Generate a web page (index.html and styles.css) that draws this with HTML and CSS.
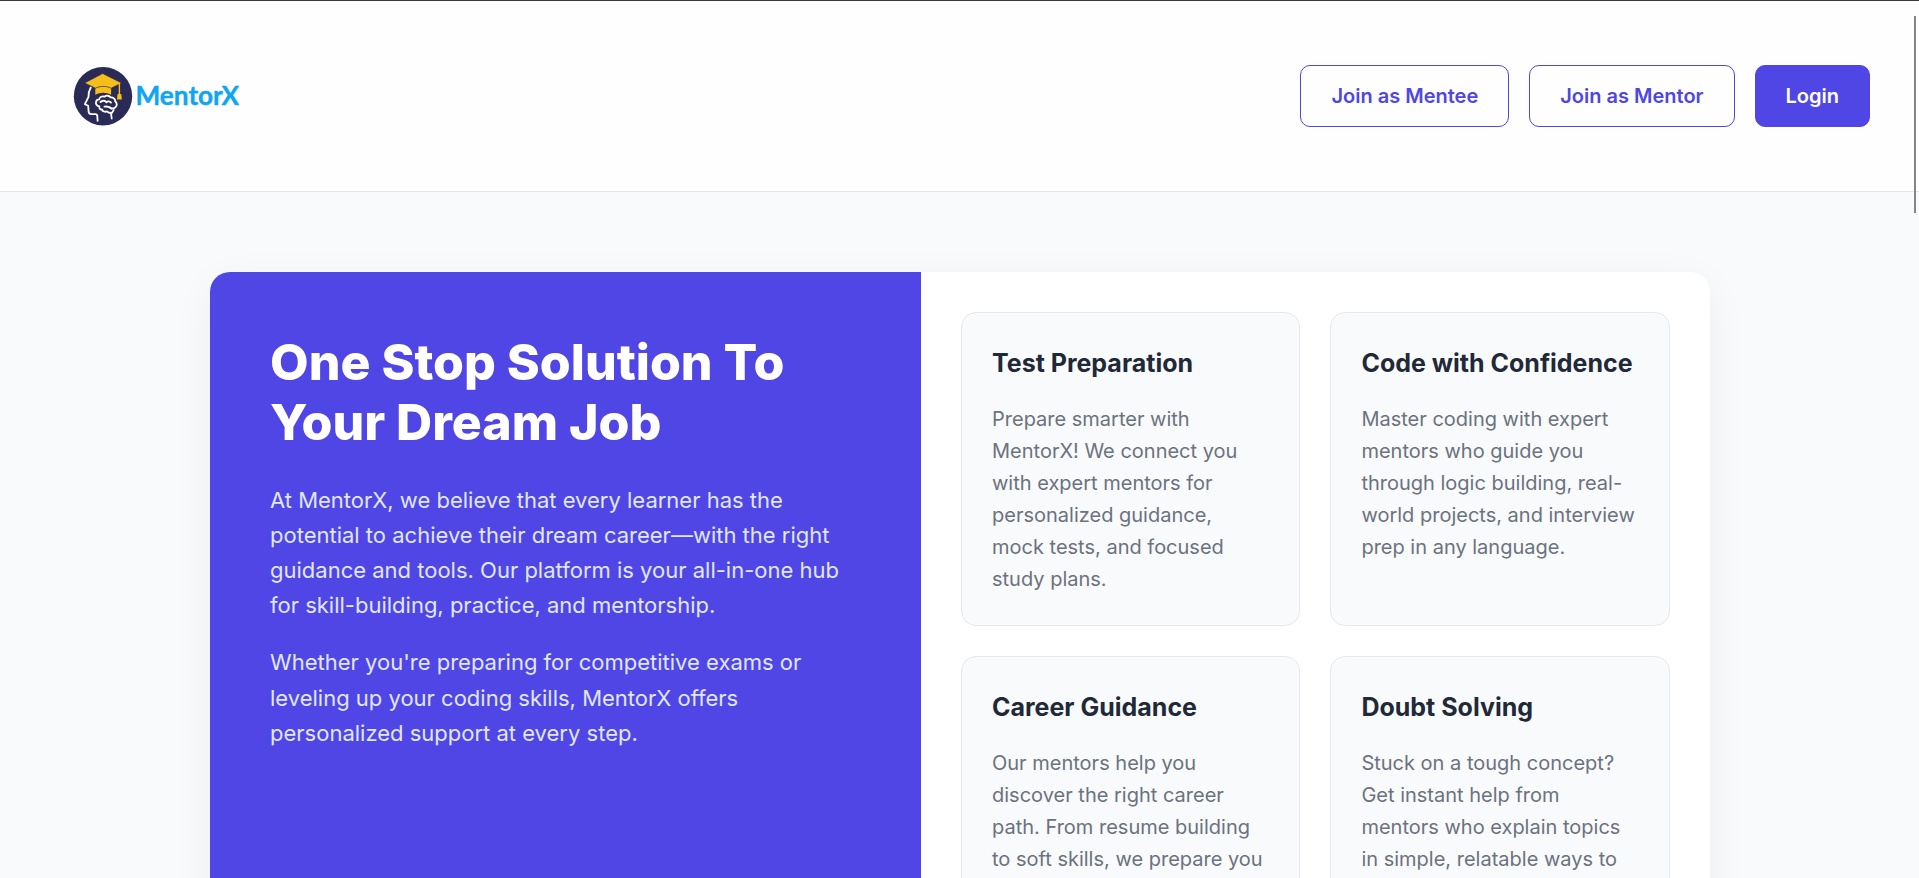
FILE: index.html
```html
<!DOCTYPE html>
<html lang="en">
<head>
<meta charset="utf-8">
<title>MentorX</title>
<link rel="stylesheet" href="styles.css">
</head>
<body>
<header class="site-header">
  <a class="logo" aria-label="MentorX">
    <svg width="180" height="70" viewBox="0 0 180 70">
      <circle cx="33" cy="35.200" r="29.200" fill="#2a2a56"/>
      <g fill="none" stroke="#fff" stroke-width="1.8" stroke-linecap="round" stroke-linejoin="round">
        <path d="M20.800 26.500c-1.800 3-2.500 6-2.300 9.300l-3.600 7.400 3.300 1.500 .4 6c.2 1.600 1.200 2.400 2.800 2.400h4c1.200 0 1.800 .7 1.900 2l.3 4.700"/>
        <path d="M41.700 57.500l-.6-4.500 2.600-4"/>
        <path d="M32 48.500c-2 .2-3.300-1.400-2.600-3.200-2.400-.2-4-2.200-3.400-4.300 .4-1.700 1.700-2.600 3.200-2.600 .6-2.500 3-3.500 5.200-2.700 2.200-1.600 5-1.200 6.300 .7 2.500-.2 4.600 1.500 4.500 3.800 1.900 1.500 2.100 4.500 .4 6-1.600 1.500-4 1.500-5.600 .2M32 48.500c.4 2 3 2.800 4.800 1.800 1.200 1.200 2.700 1.700 4.400 1.700"/>
        <path d="M30.500 41c1.800-1.800 4.600-1.600 6 .3M36.300 41.300c1.500-1.400 3.500-1.200 4.700 .3M34.500 45.700c2.400-.5 5.200 .2 6.800 2"/>
      </g>
      <path d="M25.300 25v8.800c4.700-2.700 11-2.700 15.800 0v-8.800z" fill="#f7bd18"/>
      <path d="M14.500 22l18.200-9.500 19 9.500-10.600 5.200c-4.700-2.400-11-2.400-15.600 0z" fill="#f7bd18" stroke="#2a2a56" stroke-width=".7"/>
      <path d="M49.400 22v12" stroke="#f7bd18" stroke-width="1.400"/>
      <path d="M47.600 33h3.600l.7 5.500h-5z" fill="#f7bd18"/>
      <text class="logo-text" x="65.500" y="44" textLength="103.500" lengthAdjust="spacingAndGlyphs">MentorX</text>
    </svg>
  </a>
  <nav class="nav">
    <a class="btn">Join as Mentee</a>
    <a class="btn">Join as Mentor</a>
    <a class="btn btn-solid">Login</a>
  </nav>
</header>
<main class="hero">
  <section class="intro">
    <h1>One Stop Solution To Your Dream Job</h1>
    <p>At MentorX, we believe that every learner has the potential to achieve their dream career—with the right guidance and tools. Our platform is your all-in-one hub for skill-building, practice, and mentorship.</p>
    <p>Whether you're preparing for competitive exams or leveling up your coding skills, MentorX offers personalized support at every step.</p>
  </section>
  <section class="features">
    <article class="card">
      <h2>Test Preparation</h2>
      <p>Prepare smarter with MentorX! We connect you with expert mentors for personalized guidance, mock tests, and focused study plans.</p>
    </article>
    <article class="card">
      <h2>Code with Confidence</h2>
      <p>Master coding with expert mentors who guide you through logic building, real-world projects, and interview prep in any language.</p>
    </article>
    <article class="card">
      <h2>Career Guidance</h2>
      <p>Our mentors help you discover the right career path. From resume building to soft skills, we prepare you</p>
    </article>
    <article class="card">
      <h2>Doubt Solving</h2>
      <p>Stuck on a tough concept? Get instant help from mentors who explain topics in simple, relatable ways to</p>
    </article>
  </section>
</main>
<div class="scroll-thumb"></div>
</body>
</html>
```
FILE: styles.css
```css
* {
  box-sizing: border-box;
  margin: 0;
  padding: 0;
}

body {
  display: flex;
  flex-direction: column;
  height: 878px;
  overflow: hidden;
  background: #f9fafc;
  font-family: Inter, "Liberation Sans", sans-serif;
  font-size: 20px;
  line-height: 1.6;
  color: #1f2937;
}

.site-header {
  display: flex;
  flex: none;
  align-items: center;
  justify-content: space-between;
  height: 192px;
  padding: 0 49px 0 70px;
  background: #fefefe;
  border-top: 1px solid #3a393e;
  border-bottom: 1px solid #e5e7eb;
}

.logo,
.logo svg {
  display: block;
  overflow: visible;
}

.logo-text {
  font-family: Lato, "Noto Sans", sans-serif;
  font-size: 26.500px;
  font-weight: 700;
  fill: #0fa5f2;
  stroke: #0fa5f2;
  stroke-width: 0.4px;
}

.nav {
  display: flex;
  gap: 20px;
}

.btn {
  padding: 14px 30px;
  border: 1px solid #4f46e5;
  border-radius: 10px;
  font-weight: 600;
  color: #4f46e5;
}

.btn-solid {
  background: #4f46e5;
  color: #fff;
}

.hero {
  display: grid;
  flex: none;
  grid-template-columns: 711px 789px;
  width: 1500px;
  margin: 80px 0 0 210px;
  background: #fff;
  border-radius: 20px;
  box-shadow: 0 10px 40px rgba(0, 0, 0, 0.05);
  overflow: hidden;
}

.intro {
  padding: 60px;
  background: #4f46e5;
  color: #e0e7ff;
}

.intro h1 {
  margin-bottom: 30.600px;
  font-size: 50px;
  font-weight: 800;
  line-height: 1.2;
  color: #fff;
}

.intro p {
  margin-bottom: 22px;
  font-size: 22px;
}

.features {
  display: grid;
  grid-template-columns: 339.400px 1fr;
  gap: 30px;
  padding: 40px;
}

.card {
  padding: 30px 32px 30px 30px;
  background: #f9fafc;
  border: 1px solid #e5e7eb;
  border-radius: 15px;
}

.card h2 {
  margin-bottom: 20px;
  font-size: 25px;
  font-weight: 700;
  white-space: nowrap;
}

.card p {
  color: #6b7280;
}

.scroll-thumb {
  position: absolute;
  top: 16px;
  right: 3px;
  width: 2px;
  height: 197px;
  background: #858585;
}
```
